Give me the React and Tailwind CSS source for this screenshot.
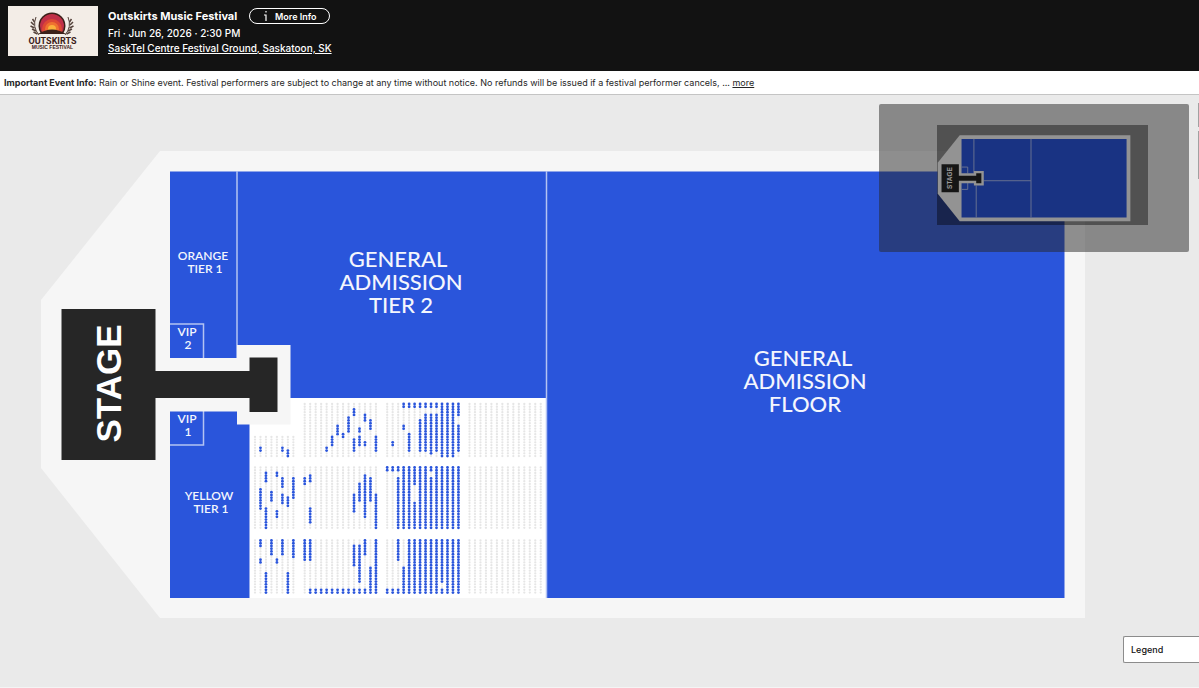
import React from "react";

// seat runs per block: [column, first row, last row]
const seatBlocks = [
  // front
  { x: 255, y: 404, cols: 8, rows: 20, skip: 12, runs: [[1, 16, 17], [5, 16, 17], [6, 17, 19]] },
  {
    x: 304.7, y: 404, cols: 14, rows: 20,
    runs: [
      [4, 16, 17], [5, 12, 15], [6, 8, 11], [7, 11, 12], [8, 5, 10], [9, 2, 4], [9, 13, 17],
      [10, 9, 10], [10, 12, 15], [11, 4, 6], [11, 14, 15], [12, 6, 9], [13, 12, 17],
    ],
  },
  {
    x: 387.2, y: 404, cols: 14, rows: 20,
    runs: [
      [1, 14, 15], [3, 0, 1], [3, 8, 9], [4, 0, 1], [4, 11, 17], [5, 0, 1], [6, 0, 1], [6, 6, 17],
      [7, 0, 1], [7, 4, 17], [8, 0, 1], [8, 4, 18], [9, 0, 1], [9, 4, 17], [10, 0, 19],
      [11, 0, 19], [12, 0, 19], [13, 0, 4], [13, 8, 17],
    ],
  },
  { x: 469.5, y: 404, cols: 14, rows: 20, runs: [] },
  // middle
  {
    x: 255, y: 467.5, cols: 8, rows: 23,
    runs: [
      [1, 8, 15], [2, 2, 5], [2, 15, 22], [3, 9, 12], [4, 2, 3], [4, 16, 18], [5, 4, 7],
      [5, 10, 13], [6, 11, 14], [7, 4, 11],
    ],
  },
  {
    x: 304.7, y: 467.5, cols: 14, rows: 23,
    runs: [
      [0, 4, 6], [1, 3, 5], [1, 15, 20], [9, 10, 16], [10, 6, 12], [11, 3, 18], [12, 4, 12],
      [13, 10, 22],
    ],
  },
  {
    x: 387.2, y: 467.5, cols: 14, rows: 23,
    runs: [
      [0, 0, 1], [1, 0, 1], [2, 0, 1], [2, 4, 22], [3, 0, 22], [4, 0, 22], [5, 0, 6], [5, 13, 22],
      [6, 0, 22], [7, 0, 22], [8, 0, 1], [8, 4, 22], [9, 0, 22], [10, 0, 22], [11, 0, 22],
      [12, 0, 22], [13, 0, 22],
    ],
  },
  { x: 469.5, y: 467.5, cols: 14, rows: 23, runs: [] },
  // back
  {
    x: 255, y: 540.5, cols: 8, rows: 20,
    runs: [
      [1, 0, 2], [1, 7, 8], [2, 12, 19], [3, 0, 5], [4, 7, 8], [5, 0, 5], [6, 12, 19], [7, 0, 6],
    ],
  },
  {
    x: 304.7, y: 540.5, cols: 14, rows: 20,
    runs: [
      [0, 0, 7], [1, 0, 7], [1, 18, 19], [2, 18, 19], [3, 18, 19], [4, 18, 19], [5, 18, 19],
      [6, 18, 19], [7, 18, 19], [8, 18, 19], [9, 2, 9], [9, 18, 19], [10, 2, 15], [10, 18, 19],
      [11, 0, 5], [11, 18, 19], [12, 10, 19], [13, 0, 19],
    ],
  },
  {
    x: 387.2, y: 540.5, cols: 14, rows: 20,
    runs: [
      [0, 18, 19], [1, 18, 19], [2, 0, 7], [2, 18, 19], [3, 10, 19], [4, 0, 19], [5, 0, 19],
      [6, 0, 19], [7, 0, 19], [8, 0, 19], [9, 0, 19], [10, 0, 15], [10, 18, 19], [11, 0, 19],
      [12, 0, 19], [13, 0, 19],
    ],
  },
  { x: 469.5, y: 540.5, cols: 14, rows: 20, runs: [] },
];

const COL = 5.48;
const ROW = 2.74;

const SeatBlock = ({ block }) => {
  const { x, y, cols, rows, skip = 0, runs } = block;
  const seats = [];
  for (let c = 0; c < cols; c++) {
    for (let r = skip; r < rows; r++) {
      const open = runs.some(([col, from, to]) => col === c && r >= from && r <= to);
      seats.push(
        <circle
          key={`${c}-${r}`}
          cx={x + c * COL}
          cy={y + r * ROW}
          r={open ? 1.4 : 1.15}
          fill={open ? "#2a55db" : "#e6e6e6"}
        />
      );
    }
  }
  return <g>{seats}</g>;
};

const Label = ({ lines, size, leading, y, weight = 500 }) => (
  <text fontFamily="Lato, sans-serif" fontSize={size} fontWeight={weight} fill="#f4f6fd" textAnchor="middle">
    {lines.map(([text, x], i) => (
      <tspan key={text} x={x} y={y + i * leading}>
        {text}
      </tspan>
    ))}
  </text>
);

// venue outline, shared by the map and the mini map
const Venue = ({ line, seated }) => (
  <g>
    <path d="M160 151H1085V618H160L41 468V300Z" fill="#f6f6f6" />
    <path d="M170 171.500H1064.500V598H170Z" fill="#2a55db" />
    {seated && <path d="M249.5 398H546V598H249.5Z" fill="#fff" />}
    <g fill="none" stroke="#b4c3f2" strokeWidth={line}>
      <path d="M237 171V358M546.5 171V598" />
      <path d="M170 324H203.500V358M170 445H203.500V411" />
      {!seated && <path d="M290 398H546M249.500 424V598" />}
    </g>
    <path d="M156 358H237V345H290.500V424.500H237V411.500H156Z" fill="#f6f6f6" />
    <path d="M61.500 309H155.500V371H249.500V357.500H277.500V412H249.500V398H155.500V460H61.500Z" fill="#262626" />
    <text
      transform="translate(120.500 383.500) rotate(-90)"
      fontFamily="'Liberation Sans', sans-serif"
      fontSize="35"
      fontWeight="700"
      fill="#fff"
      textAnchor="middle"
    >
      STAGE
    </text>
  </g>
);

const Logo = () => (
  <svg viewBox="0 0 90 50" className="h-[50px] w-[90px] shrink-0" role="img" aria-label="Outskirts Music Festival">
    <rect width="90" height="50" fill="#f3ede7" />
    <clipPath id="sun">
      <path d="M28 4H60V28H28Z" />
    </clipPath>
    <g clipPath="url(#sun)">
      <circle cx="44" cy="20" r="13.500" fill="#3b2019" />
      <circle cx="44" cy="20" r="12" fill="#c03048" />
      <circle cx="44" cy="23" r="10" fill="#dd4834" />
      <circle cx="44" cy="23" r="7" fill="#ef7230" />
      <circle cx="44" cy="23" r="4" fill="#fbb03b" />
      <path d="M30 28Q44 19 58 28V29H30Z" fill="#3b2019" />
    </g>
    <g fill="none" stroke="#54423b" strokeWidth="1">
      <path d="M31 29Q24 21 28 11M57 29Q64 21 60 11" />
      <path d="M26.500 16l-2-3M26 19l-3-3M26.500 22l-4-2M28 25l-4-2M29.500 28l-4-2M61.500 16l2-3M62 19l3-3M61.500 22l4-2M60 25l4-2M58.500 28l4-2" strokeWidth="1.500" />
    </g>
    <text x="44.500" y="38" textAnchor="middle" fontFamily="Roboto, sans-serif" fontSize="9" fontWeight="700" fill="#3b2019">
      OUTSKIRTS
    </text>
    <text x="44.500" y="43" textAnchor="middle" fontFamily="'Liberation Sans', sans-serif" fontSize="5" fontWeight="700" fill="#3b2019">
      MUSIC FESTIVAL
    </text>
  </svg>
);

const Header = () => (
  <header className="flex h-[71px] items-start gap-2.5 bg-[#121212] px-2 pt-1.5 text-white">
    <Logo />
    <div className="text-[10px] leading-[15px] font-medium">
      <div className="flex items-center gap-3 pt-0.5 pb-0.5">
        <h1 className="text-[11px] font-bold">Outskirts Music Festival</h1>
        <button
          type="button"
          className="flex h-4 w-[81px] items-center justify-center gap-1.5 rounded-full border border-white text-[9px] font-semibold"
        >
          <svg viewBox="0 0 6 12" className="h-3 w-1.5" fill="none" stroke="currentColor" aria-hidden="true">
            <path d="M3 1V2.500M1 5H3V11" strokeWidth="1.200" />
          </svg>
          More Info
        </button>
      </div>
      <p>Fri · Jun 26, 2026 · 2:30 PM</p>
      <a href="#venue" className="block underline">
        SaskTel Centre Festival Ground, Saskatoon, SK
      </a>
    </div>
  </header>
);

const MiniMap = () => (
  <div className="absolute top-[9px] right-2.5 h-[148px] w-[310px] rounded-xs bg-[#262626]/50 pt-[21px] pl-[58px]">
    <div className="relative h-[100px] w-[211px]">
      <svg viewBox="37.300 96 1143 542" className="h-full w-full" aria-hidden="true">
        <Venue line={5} />
      </svg>
      <div className="absolute inset-0 bg-black/40" />
    </div>
  </div>
);

export default function App() {
  return (
    <div className="min-h-screen overflow-x-hidden bg-[#f4f4f4] font-[Inter,sans-serif]">
      <Header />
      <p className="h-6 truncate border-b border-[#c4c4c4] bg-white px-1 text-[9px] leading-6 text-[#262626]">
        <strong>Important Event Info:</strong> Rain or Shine event. Festival performers are subject to change at any
        time without notice. No refunds will be issued if a festival performer cancels, ...{" "}
        <a href="#more" className="underline">
          more
        </a>
      </p>
      <main className="relative bg-[#eaeaea]">
        <svg viewBox="0 95 1199 592" className="block w-full" role="img" aria-label="Seat map">
          <Venue line={1.5} seated />
          {seatBlocks.map((block) => (
            <SeatBlock key={`${block.x}-${block.y}`} block={block} />
          ))}
          <Label size={22} leading={23} y={267} lines={[["GENERAL", 398], ["ADMISSION", 401], ["TIER 2", 401]]} />
          <Label size={22} leading={23} y={366} lines={[["GENERAL", 803], ["ADMISSION", 805], ["FLOOR", 805]]} />
          <Label size={12} leading={13} weight={600} y={260} lines={[["ORANGE", 203], ["TIER 1", 205]]} />
          <Label size={12} leading={13} weight={600} y={500} lines={[["YELLOW", 209], ["TIER 1", 211]]} />
          <Label size={12} leading={13} weight={600} y={336} lines={[["VIP", 187], ["2", 188]]} />
          <Label size={12} leading={13} weight={600} y={423} lines={[["VIP", 187], ["1", 188]]} />
        </svg>
        <MiniMap />
        <div className="absolute top-2 right-0 flex w-px flex-col gap-1">
          <span className="h-6 bg-neutral-400" />
          <span className="h-12 bg-neutral-400" />
        </div>
        <button
          type="button"
          className="absolute right-0 bottom-6 h-[27px] w-[76px] rounded-l-xs border border-r-0 border-[#8c8c8c] bg-white pl-[7px] text-left text-[9px] font-medium text-[#121212]"
        >
          Legend
        </button>
      </main>
    </div>
  );
}
